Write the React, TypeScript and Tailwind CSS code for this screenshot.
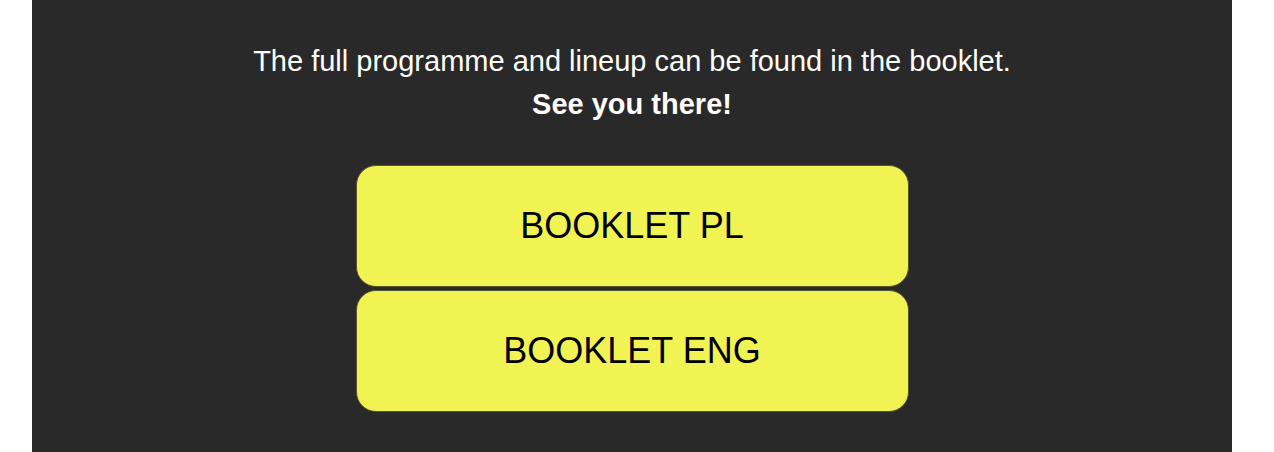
export default function App() {
  return (
    <div className="bg-white px-[32px] pr-[42px] h-[452px] font-['Liberation_Sans',Arial,sans-serif]">
      <div className="bg-[#292929] h-full flex flex-col items-center pt-[40px]">
        <p className="text-white text-[29px] leading-[43px]">
          The full programme and lineup can be found in the booklet.
        </p>
        <p className="text-white text-[29px] leading-[43px] font-bold">See you there!</p>
        <div className="mt-[39px] flex flex-col gap-[3px]">
          <a
            href="#"
            className="w-[553px] h-[122px] flex items-center justify-center rounded-[20px] border border-[#55552e] bg-[#f1f353] text-black text-[36px]"
          >
            BOOKLET PL
          </a>
          <a
            href="#"
            className="w-[553px] h-[122px] flex items-center justify-center rounded-[20px] border border-[#55552e] bg-[#f1f353] text-black text-[36px]"
          >
            BOOKLET ENG
          </a>
        </div>
      </div>
    </div>
  )
}
